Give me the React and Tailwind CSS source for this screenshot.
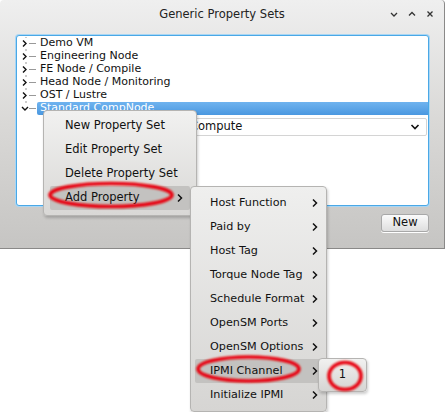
import React from "react";

const font = { fontFamily: '"DejaVu Sans", Verdana, sans-serif' };

function Chev({ down }) {
  return down ? (
    <path d="M5 5 L8 8 L11 5" fill="none" stroke="#111" strokeWidth="1.4" />
  ) : (
    <path d="M6 3.5 L9 6.5 L6 9.5" fill="none" stroke="#111" strokeWidth="1.4" />
  );
}

function TreeRow({ label, last, selected }) {
  return (
    <div className="flex h-[13px] items-center">
      <svg width="20" height="13" className="shrink-0">
        <line x1="9" y1="0" x2="9" y2={last ? 6 : 13} stroke="#999" strokeDasharray="1 1" />
        <line x1="12" y1="6.5" x2="19" y2="6.5" stroke="#999" />
        <rect x="4" y="2" width="8" height="9" fill="white" />
        <Chev down={last} />
      </svg>
      <div
        className={
          "flex h-[13px] flex-1 items-center pl-[3px] " +
          (selected ? "rounded-l-[2px] bg-gradient-to-b from-[#6fb3ef] to-[#4a98e0] text-white" : "text-[#111]")
        }
      >
        {label}
      </div>
    </div>
  );
}

function MenuItem({ label, arrow, hover, className = "" }) {
  return (
    <div
      className={
        "flex h-[24px] items-center justify-between rounded-[2px] " +
        (hover ? "bg-[#c3c2c0] " : "") +
        className
      }
    >
      <span>{label}</span>
      {arrow && (
        <svg width="8" height="10" viewBox="0 0 8 10">
          <path d="M2 1.5 L5.5 5 L2 8.5" fill="none" stroke="#111" strokeWidth="1.5" />
        </svg>
      )}
    </div>
  );
}

export default function App() {
  const sub = [
    "Host Function",
    "Paid by",
    "Host Tag",
    "Torque Node Tag",
    "Schedule Format",
    "OpenSM Ports",
    "OpenSM Options",
    "IPMI Channel",
    "Initialize IPMI",
  ];
  return (
    <div className="relative h-[412px] w-[446px] overflow-hidden bg-white text-[11px] text-[#111]" style={font}>
      {/* window */}
      <div className="flex h-[249px] w-[445px] flex-col rounded-t-[4px] border-r border-b border-[#8a8988] bg-gradient-to-b from-[#efefef] via-[#d9d8d6] to-[#c6c5c3]">
        <div className="relative flex h-[28px] items-center justify-center pt-[1px] text-[11.5px] text-[#222]">
          Generic Property Sets
          <div className="absolute right-[8px] top-[8px] flex gap-[6px]">
            <svg width="12" height="12" viewBox="0 0 12 12">
              <path d="M3 5 L6 8 L9 5" fill="none" stroke="#333" strokeWidth="1.3" />
            </svg>
            <svg width="12" height="12" viewBox="0 0 12 12">
              <path d="M3 7.5 L6 4.5 L9 7.5" fill="none" stroke="#333" strokeWidth="1.3" />
            </svg>
            <svg width="12" height="12" viewBox="0 0 12 12">
              <path d="M3.5 3.5 L8.5 8.5 M8.5 3.5 L3.5 8.5" fill="none" stroke="#333" strokeWidth="1.3" />
            </svg>
          </div>
        </div>
        <div className="ml-[16px] mt-[7px] h-[171px] w-[413px] rounded-[3px] border border-[#4aa8e6] bg-white pt-[1px] shadow-[0_0_0_1px_#a9d6f4]">
          <TreeRow label="Demo VM" />
          <TreeRow label="Engineering Node" />
          <TreeRow label="FE Node / Compile" />
          <TreeRow label="Head Node / Monitoring" />
          <TreeRow label="OST / Lustre" />
          <TreeRow label="Standard CompNode" last selected />
          <div className="mt-[3px] flex h-[18px] items-center justify-between rounded-[2px] border border-[#d4d4d4] pl-[6px] pr-[6px] ml-[166px] mr-[1px] text-[11.5px]">
            <span>Compute</span>
            <svg width="10" height="8" viewBox="0 0 10 8">
              <path d="M1.5 2 L5 5.5 L8.5 2" fill="none" stroke="#111" strokeWidth="1.6" />
            </svg>
          </div>
        </div>
        <div className="mr-[15px] mt-[8px] flex justify-end">
          <div className="flex h-[18px] w-[48px] items-center justify-center rounded-[3px] border border-[#a8a8a8] bg-gradient-to-b from-[#fbfbfb] to-[#dedede] text-[11.5px] shadow-[0_1px_0_#fff]">
            New
          </div>
        </div>
      </div>

      {/* context menu */}
      <div className="absolute left-[43px] top-[110px] w-[154px] rounded-[4px] border border-[#b5b4b2] bg-gradient-to-b from-[#f1f1f0] to-[#d9d8d6] px-[6px] pb-[5px] pt-[3px] text-[11.5px] shadow-[1px_2px_3px_rgba(0,0,0,0.2)]">
        <MenuItem label="New Property Set" className="pl-[15px] pr-[6px]" />
        <MenuItem label="Edit Property Set" className="pl-[15px] pr-[6px]" />
        <MenuItem label="Delete Property Set" className="pl-[15px] pr-[6px]" />
        <MenuItem label="Add Property" arrow hover className="pl-[15px] pr-[6px]" />
      </div>

      {/* submenu */}
      <div className="absolute left-[190px] top-[186px] h-[226px] w-[137px] rounded-[4px] border border-[#b5b4b2] bg-gradient-to-b from-[#efefee] to-[#d6d5d3] px-[4px] pt-[4px] text-[11.2px] shadow-[1px_2px_3px_rgba(0,0,0,0.2)]">
        {sub.map((s) => (
          <MenuItem key={s} label={s} arrow hover={s === "IPMI Channel"} className="pl-[15px] pr-[3px]" />
        ))}
      </div>

      {/* third menu */}
      <div className="absolute left-[318px] top-[358px] flex h-[34px] w-[49px] items-center justify-center rounded-[4px] border border-[#b5b4b2] bg-gradient-to-b from-[#f1f1f0] to-[#d6d5d3] text-[11.5px] shadow-[1px_2px_3px_rgba(0,0,0,0.2)]">
        1
      </div>

      {/* red annotations */}
      <svg className="pointer-events-none absolute left-0 top-0" width="446" height="412">
        <defs>
          <filter id="b" x="-10%" y="-40%" width="120%" height="180%">
            <feGaussianBlur stdDeviation="0.8" />
          </filter>
        </defs>
        <g filter="url(#b)" fill="none" stroke="#e8000a" strokeWidth="3.6">
          <ellipse cx="111" cy="195" rx="61" ry="11.5" />
          <ellipse cx="248.5" cy="369" rx="50.5" ry="12" />
          <ellipse cx="345" cy="376" rx="16" ry="13.5" />
        </g>
      </svg>
    </div>
  );
}
